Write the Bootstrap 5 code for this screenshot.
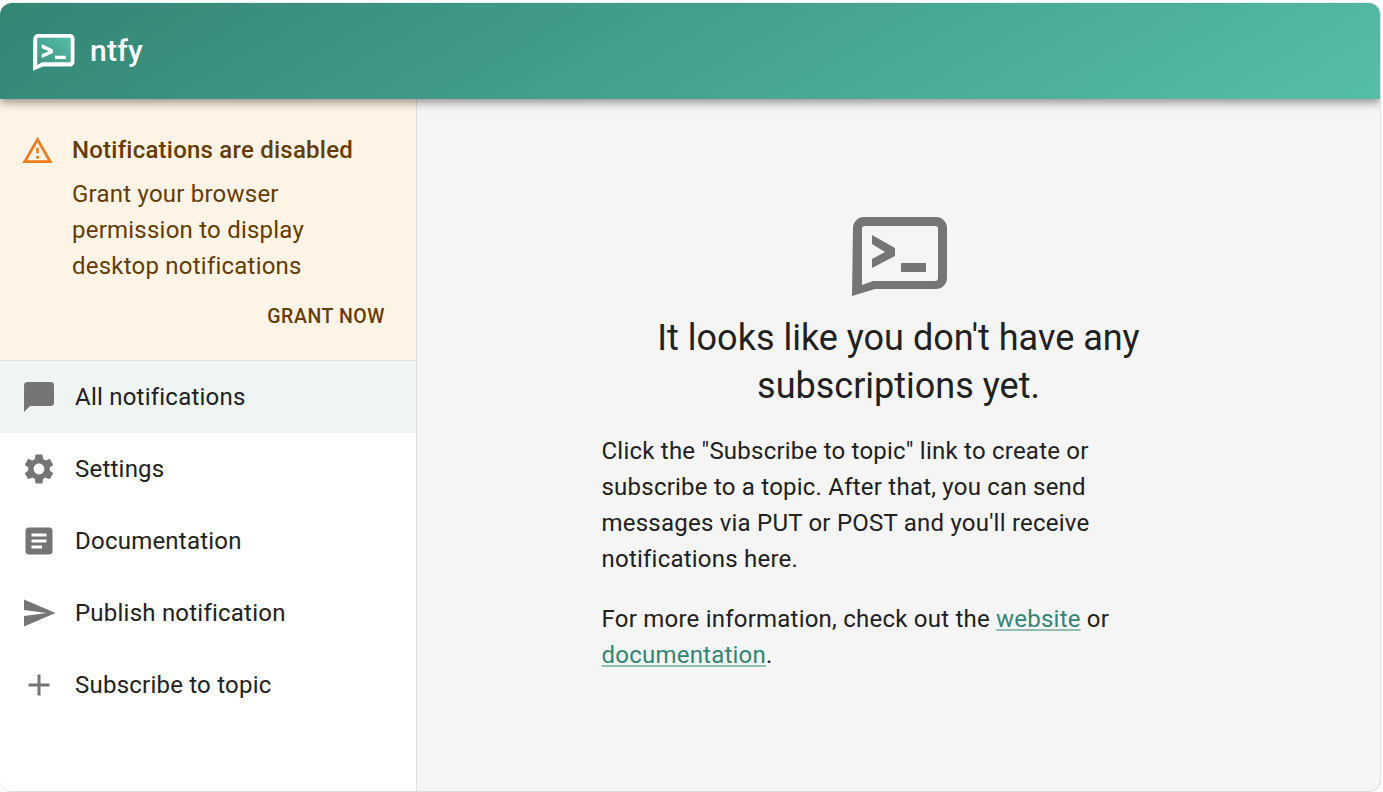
<!DOCTYPE html>
<html lang="en">
<head>
<meta charset="utf-8">
<title>ntfy</title>
<link href="https://cdn.jsdelivr.net/npm/bootstrap@5.3.0/dist/css/bootstrap.min.css" rel="stylesheet">
<style>
html, body { height: 100%; overflow: hidden; background: #fff; }
body { font-family: Roboto, "Liberation Sans", sans-serif; font-size: 24px; line-height: 36px; letter-spacing: .00938em; color: #212121; }
.app-window { width: 1381px; height: 789px; margin-top: 3px; border-radius: 12px; overflow: hidden; border-right: 1px solid #dedede; border-bottom: 1px solid #dedede; background: #f5f5f5; box-shadow: 0 -1px 0 #eeeeee; }
.app-bar { height: 96px; padding: 0 0 0 33px; background: linear-gradient(150deg, #338574 0%, #56bda8 100%); box-shadow: 0 3px 6px -1px rgba(0,0,0,.2), 0 6px 7px rgba(0,0,0,.14), 0 2px 15px rgba(0,0,0,.12); z-index: 2; flex: none; }
.app-logo { width: 42px; height: 37px; margin-top: 3px; flex: none; }
.app-title { font-size: 30px; font-weight: 500; letter-spacing: .0075em; color: #fff; line-height: 1; padding: 0; margin: 0 0 0 15px; }
.app-side { width: 417px; flex: none; background: #fff; border-right: 1px solid #e0e0e0; }
.warn-box { height: 262px; background: #fff4e5; color: #663c00; padding: 33px 0 0 21px; border-bottom: 1px solid #e0e0e0; }
.warn-icon { width: 33px; height: 33px; fill: #ed7d1c; flex: none; margin: 2px 18px 0 0; }
.warn-title { font-weight: 500; margin-bottom: 8px; line-height: 36px; }
.warn-text { width: 300px; }
.warn-btn { font-size: 19.5px; font-weight: 500; letter-spacing: .02857em; color: #663c00; text-transform: uppercase; border: 0; padding: 0; line-height: 30px; margin: 18px 31px 0 0; }
.warn-btn:hover { color: #663c00; }
.side-item { height: 72px; padding: 0 0 0 21px; border: 0; color: #212121; font-size: 24px; background: transparent; }
.side-item.is-selected { background: #eff4f4; }
.side-icon { width: 36px; height: 36px; fill: #757575; flex: none; margin-right: 18px; }
.app-main { padding-top: 118px; }
.empty-box { width: 594px; }
.empty-logo { width: 96px; height: 80px; fill: #757575; display: block; margin: 0 0 17px 250.5px; }
.empty-title { font-size: 36px; line-height: 48px; font-weight: 400; letter-spacing: 0; margin-bottom: 23px; }
.empty-text { margin-bottom: 24px; }
.empty-text a { color: #338574; text-decoration-color: rgba(51,133,116,.5); }
</style>
</head>
<body>
<div class="app-window d-flex flex-column">
  <nav class="navbar app-bar flex-nowrap justify-content-start position-relative">
    <svg class="app-logo" viewBox="0 0 42 37">
      <defs><linearGradient id="lg" x1="0" y1="1" x2="1" y2="0"><stop offset="0" stop-color="#3f9683"/><stop offset="1" stop-color="#56bda8"/></linearGradient></defs>
      <path fill="url(#lg)" d="M4 5V31L9 28.5H38V3.5H4Z"/>
      <path fill="#fff" fill-rule="evenodd" d="M5 0H37A4.5 4.5 0 0 1 41.5 4.5V28A4.5 4.5 0 0 1 37 32.5H10L0 36.7L.3 4.7A4.7 4.7 0 0 1 5 0ZM5.4 3.8A1.2 1.2 0 0 0 4.2 5V31L9.2 28.2H36.5A1.2 1.2 0 0 0 37.7 27V5A1.2 1.2 0 0 0 36.5 3.8Z"/>
      <path fill="#fff" d="M8.7 10L20 15.6V19L8.7 24V20.2L15.8 17.3L8.7 14ZM22 21.7H32.7V25H22Z"/>
    </svg>
    <span class="navbar-brand app-title">ntfy</span>
  </nav>
  <div class="d-flex flex-grow-1 overflow-hidden">
    <aside class="app-side d-flex flex-column">
      <div class="warn-box d-flex flex-column">
        <div class="d-flex">
          <svg class="warn-icon" viewBox="0 0 24 24"><path d="M1 21h22L12 2 1 21zm3.47-2L12 5.99 19.53 19H4.47zM11 16h2v2h-2zm0-6h2v4h-2z"/></svg>
          <div>
            <div class="warn-title">Notifications are disabled</div>
            <div class="warn-text">Grant your browser permission to display desktop notifications</div>
          </div>
        </div>
        <div class="d-flex justify-content-end">
          <button type="button" class="btn warn-btn">Grant now</button>
        </div>
      </div>
      <div class="list-group list-group-flush">
        <a href="#" class="list-group-item side-item is-selected d-flex align-items-center">
          <svg class="side-icon" viewBox="0 0 24 24"><path d="M20 2H4c-1.1 0-1.99.9-1.99 2L2 22l4-4h14c1.1 0 2-.9 2-2V4c0-1.1-.9-2-2-2z"/></svg>All notifications</a>
        <a href="#" class="list-group-item side-item d-flex align-items-center">
          <svg class="side-icon" viewBox="0 0 24 24"><path d="M19.14 12.94c.04-.3.06-.61.06-.94 0-.32-.02-.64-.07-.94l2.03-1.58c.18-.14.23-.41.12-.61l-1.92-3.32c-.12-.22-.37-.29-.59-.22l-2.39.96c-.5-.38-1.03-.7-1.62-.94l-.36-2.54c-.04-.24-.24-.41-.48-.41h-3.84c-.24 0-.43.17-.47.41l-.36 2.54c-.59.24-1.13.57-1.62.94l-2.39-.96c-.22-.08-.47 0-.59.22L2.74 8.87c-.12.21-.08.47.12.61l2.03 1.58c-.05.3-.09.63-.09.94s.02.64.07.94l-2.03 1.58c-.18.14-.23.41-.12.61l1.92 3.32c.12.22.37.29.59.22l2.39-.96c.5.38 1.03.7 1.62.94l.36 2.54c.05.24.24.41.48.41h3.84c.24 0 .44-.17.47-.41l.36-2.54c.59-.24 1.13-.56 1.62-.94l2.39.96c.22.08.47 0 .59-.22l1.92-3.32c.12-.22.07-.47-.12-.61l-2.01-1.58zM12 15.6c-1.98 0-3.6-1.62-3.6-3.6s1.62-3.6 3.6-3.6 3.6 1.62 3.6 3.6-1.62 3.6-3.6 3.6z"/></svg>Settings</a>
        <a href="#" class="list-group-item side-item d-flex align-items-center">
          <svg class="side-icon" viewBox="0 0 24 24"><path d="M19 3H5c-1.1 0-2 .9-2 2v14c0 1.1.9 2 2 2h14c1.1 0 2-.9 2-2V5c0-1.1-.9-2-2-2zm-5 14H7v-2h7v2zm3-4H7v-2h10v2zm0-4H7V7h10v2z"/></svg>Documentation</a>
        <a href="#" class="list-group-item side-item d-flex align-items-center">
          <svg class="side-icon" viewBox="0 0 24 24"><path d="M2.01 21 23 12 2.01 3 2 10l15 2-15 2z"/></svg>Publish notification</a>
        <a href="#" class="list-group-item side-item d-flex align-items-center">
          <svg class="side-icon" viewBox="0 0 24 24"><path d="M19 13h-6v6h-2v-6H5v-2h6V5h2v6h6v2z"/></svg>Subscribe to topic</a>
      </div>
    </aside>
    <main class="app-main flex-grow-1 d-flex justify-content-center">
      <div class="empty-box">
        <svg class="empty-logo" viewBox="0 0 96 80">
          <path fill-rule="evenodd" d="M12 0H84A11 11 0 0 1 95 11V61A11 11 0 0 1 84 72H23L0 79L1 11A11 11 0 0 1 12 0ZM13 9A3 3 0 0 0 10 12V68L21 64H83A3 3 0 0 0 86 61V12A3 3 0 0 0 83 9Z"/>
          <path d="M20 18L43 31V39L20 51V42L33 35L20 27ZM49 46H74V55H49Z"/>
        </svg>
        <h5 class="empty-title text-center">It looks like you don't have any subscriptions yet.</h5>
        <p class="empty-text">Click the "Subscribe to topic" link to create or subscribe to a topic. After that, you can send messages via PUT or POST and you'll receive notifications here.</p>
        <p class="empty-text">For more information, check out the <a href="#">website</a> or <a href="#">documentation</a>.</p>
      </div>
    </main>
  </div>
</div>
<script src="https://cdn.jsdelivr.net/npm/bootstrap@5.3.0/dist/js/bootstrap.bundle.min.js"></script>
</body>
</html>
